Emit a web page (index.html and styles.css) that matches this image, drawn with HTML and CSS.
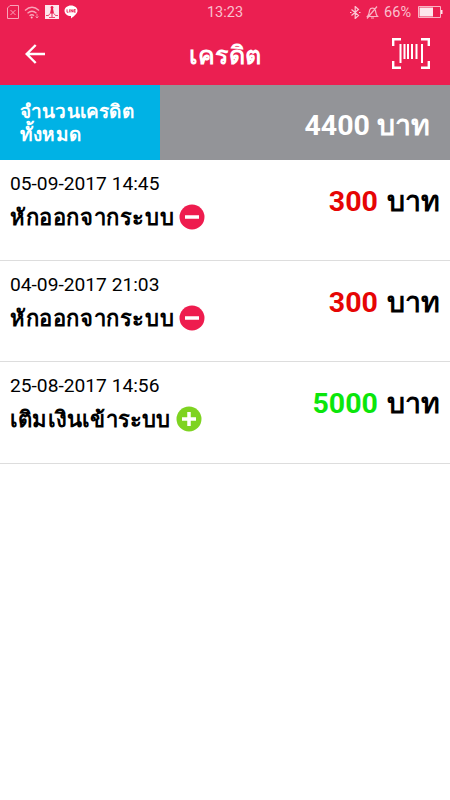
FILE: index.html
```html
<!DOCTYPE html>
<html lang="th">
    <head>
        <meta charset="UTF-8" />
        <meta name="viewport" content="width=device-width, initial-scale=1.0" />
        <title>เครดิต</title>
        <link rel="stylesheet" href="styles.css">
    </head>
    <body>
        <header class="header">
            <div class="status-bar">
                <div class="status-left">
                    <svg width="12" height="14" viewBox="0 0 12 14" fill="none" stroke="#f9a3b8">
                        <path d="M3 .5h8.500v13H.5V3zM3.500 5l5 5M8.500 5l-5 5" />
                    </svg>
                    <svg width="16" height="13" viewBox="0 0 16 13" fill="none" stroke="#f9a3b8" stroke-width="1.300">
                        <path d="M1 4.500q7-6.500 14 0M3.500 7.200q4.500-4 9 0M5.500 9.700q2.500-2 4.500 0" />
                        <circle cx="7.700" cy="11.500" r="1" fill="#f9c3d0" stroke="none" />
                        <path d="M13 8v4M11.500 10.500l1.500 1.500 1.500-1.500" stroke-width=".8" />
                    </svg>
                    <svg width="14" height="14" viewBox="0 0 14 14">
                        <path fill="#fde6ec" d="M0 0h14v14H0z" />
                        <path fill="#e91e50" d="M7 1a1.500 1.500 0 0 1 1 2.600L9 8.500H5l1-4.900A1.500 1.500 0 0 1 7 1zM6.500 8h1v4h-1z" />
                        <path fill="none" stroke="#e91e50" stroke-width=".8" d="M1 10.500h2.500L5 8.500M13 10.500h-2.500L9 8.500M4 12.500h6" />
                    </svg>
                    <svg width="14" height="14" viewBox="0 0 14 14">
                        <path fill="#fff" d="M7 .5c3.700 0 6.500 2.300 6.500 5.300 0 2.700-3.500 5.500-6.500 7.700v-2.400C3.300 11.100.5 8.800.5 5.800S3.300.5 7 .5z" />
                        <path fill="none" stroke="#e91e50" stroke-width=".9" d="M3 4.300v2.900h1.500M5.700 4.300v3.100M7 7.400V4.500l1.800 2.700V4.300M11.700 4.600H10v2.500h1.700M10 5.900h1.500" />
                    </svg>
                </div>
                <span class="clock">13:23</span>
                <div class="status-right">
                    <svg width="11" height="13" viewBox="0 0 11 13" fill="none" stroke="#fbc6d3" stroke-width="1.200">
                        <path d="M1.500 3.500l7 6-3.300 3V.5l3.300 3-7 6M0 6.500h1.500M9 6.500h1.500" />
                    </svg>
                    <svg width="13" height="13" viewBox="0 0 13 13" fill="none" stroke="#f9b3c4" stroke-width="1.200">
                        <path d="M1.500 10.500C3.500 8.500 3 6 3.700 4c.8-2.400 4.800-2.400 5.600 0 .7 2 .2 4.500 2.200 6.500zM5 12h3M11 .5L1 12.500" />
                    </svg>
                    <span class="percent">66%</span>
                    <svg width="25" height="12" viewBox="0 0 25 12">
                        <path fill="none" stroke="#f9b3c4" d="M.5.5h22v11H.5z" />
                        <path fill="#fde6ec" d="M1.500 1.500H15v9H1.500zM23 4h1.500v4H23z" />
                    </svg>
                </div>
            </div>
            <div class="nav-bar">
                <svg class="back" width="20" height="20" viewBox="0 0 20 20" fill="none" stroke="#fff" stroke-width="2.400">
                    <path d="M20 10H2M10.700 1L1.700 10l9 9" />
                </svg>
                <h1>เครดิต</h1>
                <svg class="scan" width="38" height="31" viewBox="0 0 38 31" fill="none" stroke="#fff" stroke-width="2">
                    <path stroke-width="2.400" d="M1.200 8V1.200H9M29 1.200h7.800V8M36.800 23v6.800H29M9 29.800H1.200V23" />
                    <path d="M8.500 6v19M12.500 6v15M16 6v15M20 6v15M24.500 6v15M30 6v19" />
                </svg>
            </div>
        </header>

        <section class="summary">
            <div class="summary-label">จำนวนเครดิต<br>ทั้งหมด</div>
            <div class="summary-total">4400 <span class="baht">บาท</span></div>
        </section>

        <ul class="history">
            <li>
                <div class="detail">
                    <div class="date">05-09-2017 14:45</div>
                    <div class="type">
                        <span class="type-out">หักออกจากระบบ</span>
                        <svg width="26" height="26" viewBox="0 0 26 26">
                            <circle cx="13" cy="13" r="12.500" fill="#ee1c4e" />
                            <path d="M6 13h14" stroke="#fff" stroke-width="3.500" />
                        </svg>
                    </div>
                </div>
                <div class="amount"><span class="minus">300</span> <span class="baht">บาท</span></div>
            </li>
            <li>
                <div class="detail">
                    <div class="date">04-09-2017 21:03</div>
                    <div class="type">
                        <span class="type-out">หักออกจากระบบ</span>
                        <svg width="26" height="26" viewBox="0 0 26 26">
                            <circle cx="13" cy="13" r="12.500" fill="#ee1c4e" />
                            <path d="M6 13h14" stroke="#fff" stroke-width="3.500" />
                        </svg>
                    </div>
                </div>
                <div class="amount"><span class="minus">300</span> <span class="baht">บาท</span></div>
            </li>
            <li>
                <div class="detail">
                    <div class="date">25-08-2017 14:56</div>
                    <div class="type">
                        <span class="type-in">เติมเงินเข้าระบบ</span>
                        <svg width="26" height="26" viewBox="0 0 26 26">
                            <circle cx="13" cy="13" r="12.500" fill="#7ed321" />
                            <path d="M6 13h14M13 6v14" stroke="#fff" stroke-width="3.500" />
                        </svg>
                    </div>
                </div>
                <div class="amount"><span class="plus">5000</span> <span class="baht">บาท</span></div>
            </li>
        </ul>
    </body>
</html>
```
FILE: styles.css
```css
body {
    font-family: Roboto, "DejaVu Sans", sans-serif;
    background-color: #fff;
    color: #000;
    margin: 0;
}
svg {
    display: block;
    flex: none;
}
.header {
    height: 85px;
    background-color: #eb1f51;
    color: #fff;
}
.status-bar {
    display: grid;
    grid-template-columns: 1fr auto 1fr;
    align-items: center;
    height: 24px;
    padding: 0 7px;
}
.status-left,
.status-right {
    display: flex;
    align-items: center;
    gap: 5px;
}
.status-right {
    justify-content: flex-end;
}
.clock,
.percent {
    font-size: 14.5px;
    color: #fac0ce;
}
.percent {
    margin-right: 2px;
}
.nav-bar {
    display: grid;
    grid-template-columns: 60px 1fr 60px;
    align-items: center;
    height: 61px;
}
.back {
    margin: -2px 0 0 25px;
}
h1 {
    margin: 2px 0 0;
    font-size: 25px;
    letter-spacing: 0.1px;
    line-height: 30px;
    text-align: center;
}
.scan {
    margin: -2px 0 0 2px;
}
.summary {
    display: flex;
    height: 75px;
}
.summary-label {
    box-sizing: border-box;
    width: 160px;
    padding: 15px 0 0 20px;
    background-color: #00b2e5;
    color: #fff;
    font-size: 19px;
    font-weight: bold;
    letter-spacing: 0.2px;
    line-height: 23px;
    white-space: nowrap;
}
.summary-total {
    flex: 1;
    padding-right: 20px;
    background-color: #939498;
    color: #fff;
    font-size: 28.5px;
    font-weight: bold;
    line-height: 82px;
    text-align: right;
}
.history {
    list-style: none;
    margin: 0;
    padding: 0;
}
.history li {
    display: flex;
    justify-content: space-between;
    box-sizing: border-box;
    height: 101.2px;
    padding: 12px 10px 0;
    border-bottom: 1px solid #ddd;
}
.date {
    font-size: 19.2px;
    line-height: 24px;
}
.type {
    display: flex;
    align-items: center;
    gap: 5px;
    height: 26px;
    margin-top: 8px;
    font-size: 22px;
    font-weight: bold;
    white-space: nowrap;
}
.type-out {
    letter-spacing: 0.6px;
}
.type-in {
    letter-spacing: 0.2px;
}
.amount {
    font-size: 28.5px;
    font-weight: bold;
    line-height: 60px;
    white-space: nowrap;
}
.amount .baht {
    margin-left: 2px;
}
.minus {
    color: #e60505;
}
.plus {
    color: #0be60b;
}
```
